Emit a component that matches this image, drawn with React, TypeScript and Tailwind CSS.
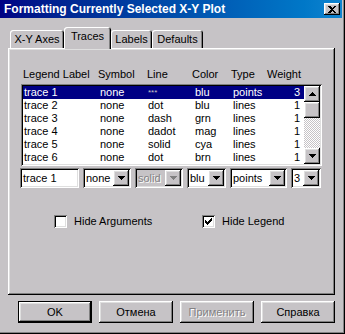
import React from "react";

const raised =
  "shadow-[inset_-1px_-1px_#000,inset_1px_1px_#fff,inset_-2px_-2px_#808080,inset_2px_2px_#dfdfdf]";
const sunken =
  "shadow-[inset_1px_1px_#808080,inset_-1px_-1px_#fff,inset_2px_2px_#000,inset_-2px_-2px_#dfdfdf]";

const rows = [
  ["trace 1", "none", "***", "blu", "points", "3"],
  ["trace 2", "none", "dot", "blu", "lines", "1"],
  ["trace 3", "none", "dash", "grn", "lines", "1"],
  ["trace 4", "none", "dadot", "mag", "lines", "1"],
  ["trace 5", "none", "solid", "cya", "lines", "1"],
  ["trace 6", "none", "dot", "brn", "lines", "1"],
];

const Arrow = ({ up = false, gray = false }: { up?: boolean; gray?: boolean }) => (
  <svg width="7" height="4" viewBox="0 0 7 4" shapeRendering="crispEdges">
    <g fill={gray ? "#808080" : "#000"}>
      <rect x="0" y={up ? 3 : 0} width="7" height="1" />
      <rect x="1" y={up ? 2 : 1} width="5" height="1" />
      <rect x="2" y={up ? 1 : 2} width="3" height="1" />
      <rect x="3" y={up ? 0 : 3} width="1" height="1" />
    </g>
  </svg>
);

const Combo = ({
  value,
  className,
  disabled = false,
}: {
  value: string;
  className: string;
  disabled?: boolean;
}) => (
  <div
    className={`flex h-[20px] items-center p-[2px] ${sunken} ${className} ${
      disabled ? "bg-[#c6c3c6]" : "bg-white"
    }`}
  >
    <span
      className={`flex-1 pl-[1px] ${
        disabled ? "text-[#848284] [text-shadow:1px_1px_#fff]" : "text-black"
      }`}
    >
      {value}
    </span>
    <div className={`flex h-[16px] w-[16px] items-center justify-center bg-[#c6c3c6] ${raised}`}>
      <Arrow gray={disabled} />
    </div>
  </div>
);

const Check = ({ label, checked, className = "" }: { label: string; checked?: boolean; className?: string }) => (
  <div className={`flex items-center gap-[7px] ${className}`}>
    <div className={`flex h-[13px] w-[13px] items-center justify-center bg-white ${sunken}`}>
      {checked && (
        <svg width="7" height="7" viewBox="0 0 7 7" shapeRendering="crispEdges">
          <path d="M6 0h1v3h-1v1h-1v1h-1v1h-1v1h-1v-1h-1v-1h-1v-3h1v1h1v1h1v-1h1v-1h1z" fill="#000" />
        </svg>
      )}
    </div>
    <span>{label}</span>
  </div>
);

const Tab = ({ label, active, className }: { label: string; active?: boolean; className: string }) => (
  <div
    className={`flex items-center justify-center rounded-t-[3px] bg-[#c6c3c6] shadow-[inset_1px_1px_#fff,inset_-1px_0_#000,inset_-2px_0_#808080] ${className} ${
      active ? "relative z-10 -mb-[1px] h-[22px] pb-[3px]" : "h-[18px] pt-[1px]"
    }`}
  >
    {label}
  </div>
);

const Button = ({ label, def, disabled }: { label: string; def?: boolean; disabled?: boolean }) => (
  <div
    className={`flex h-[22px] w-[74px] items-center justify-center ${
      def ? "border border-black" : ""
    } ${raised} ${disabled ? "text-[#848284] [text-shadow:1px_1px_#fff]" : "text-black"}`}
  >
    {label}
  </div>
);

export default function App() {
  return (
    <div className="h-[334px] w-[345px] bg-[#c6c3c6] font-['Liberation_Sans',Arial,sans-serif] text-[11px] leading-[13px] text-black shadow-[inset_-1px_-1px_#000,inset_-2px_-2px_#848284] pr-[3px]">
      <div className="flex h-[18px] items-center justify-between bg-gradient-to-r from-[#000084] to-[#1084d0] pl-[4px] pr-[2px]">
        <span className="text-[12px] font-bold text-white">Formatting Currently Selected X-Y Plot</span>
        <div className={`flex h-[12px] w-[16px] items-center justify-center bg-[#c6c3c6] ${raised}`}>
          <svg width="8" height="7" viewBox="0 0 8 7" shapeRendering="crispEdges">
            <path d="M0 0h2l2 2 2-2h2l-3 3.5 3 3.5h-2l-2-2-2 2h-2l3-3.5z" fill="#000" />
          </svg>
        </div>
      </div>

      <div className="ml-[10px] mt-[9px] flex items-end">
        <Tab label="X-Y Axes" className="w-[54px]" />
        <Tab label="Traces" active className="w-[47px]" />
        <Tab label="Labels" className="w-[41px]" />
        <Tab label="Defaults" className="w-[51px]" />
      </div>

      <div className={`ml-[8px] h-[247px] w-[327px] px-[13px] pt-[20px] ${raised}`}>
        <div className="flex pl-[2px]">
          <span className="w-[75px]">Legend Label</span>
          <span className="w-[49px]">Symbol</span>
          <span className="w-[45px]">Line</span>
          <span className="w-[39px]">Color</span>
          <span className="w-[36px]">Type</span>
          <span>Weight</span>
        </div>

        <div className={`mt-[3px] flex h-[82px] w-[301px] bg-white p-[2px] ${sunken}`}>
          <div className="flex-1">
            {rows.map((r, i) => (
              <div
                key={r[0]}
                className={`flex h-[13px] items-center pl-[1px] pr-[4px] ${
                  i === 0 ? "bg-[#000084] text-white" : "text-black"
                }`}
              >
                <span className="w-[76px]">{r[0]}</span>
                <span className="w-[48px]">{r[1]}</span>
                <span className={`w-[47px] ${i === 0 ? "text-[8px] text-[#c6c3c6]" : ""}`}>{r[2]}</span>
                <span className="w-[38px]">{r[3]}</span>
                <span className="flex-1">{r[4]}</span>
                <span>{r[5]}</span>
              </div>
            ))}
          </div>
          <div className="flex w-[16px] flex-col">
            <div className={`flex h-[16px] items-center justify-center bg-[#c6c3c6] ${raised}`}>
              <Arrow up />
            </div>
            <div className={`h-[16px] bg-[#c6c3c6] ${raised}`} />
            <div className="flex-1 bg-[repeating-conic-gradient(#fff_0_25%,#c6c3c6_0_50%)] bg-[length:2px_2px]" />
            <div className={`flex h-[16px] items-center justify-center bg-[#c6c3c6] ${raised}`}>
              <Arrow />
            </div>
          </div>
        </div>

        <div className="-ml-[1px] mt-[2px] flex gap-[4px]">
          <div className={`flex h-[20px] w-[59px] items-center bg-white px-[3px] ${sunken}`}>trace 1</div>
          <Combo value="none" className="w-[48px]" />
          <Combo value="solid" className="w-[48px]" disabled />
          <Combo value="blu" className="w-[39px]" />
          <Combo value="points" className="w-[57px]" />
          <Combo value="3" className="w-[30px]" />
        </div>

        <div className="ml-[33px] mt-[27px] flex">
          <Check label="Hide Arguments" className="w-[148px]" />
          <Check label="Hide Legend" checked />
        </div>
      </div>

      <div className="ml-[18px] mt-[6px] flex gap-[7px]">
        <Button label="OK" def />
        <Button label="Отмена" />
        <Button label="Применить" disabled />
        <Button label="Справка" />
      </div>
    </div>
  );
}
